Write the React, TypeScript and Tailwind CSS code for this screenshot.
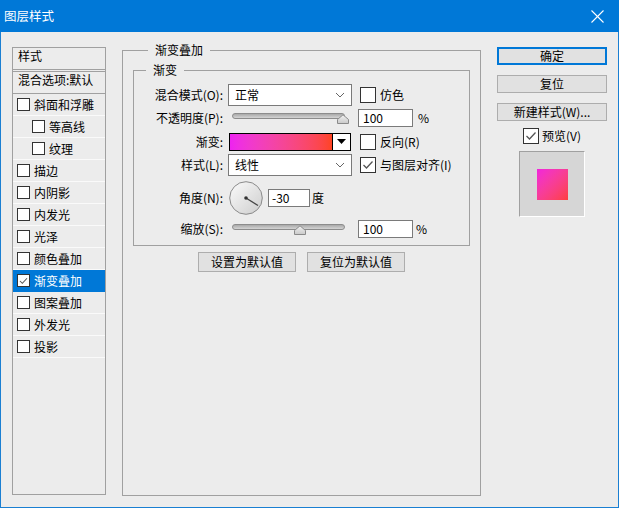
import React from "react";

function Check({ size, checked }: { size: "sm" | "md"; checked?: boolean }) {
  const cls =
    size === "sm"
      ? "w-[13px] h-[13px] border border-[#333333] bg-white flex items-center justify-center shrink-0"
      : "w-[16px] h-[16px] border border-[#333333] bg-white flex items-center justify-center shrink-0";
  return (
    <span className={cls}>
      {checked && (
        <svg width="14" height="14" viewBox="0 0 14 14">
          <polyline points="2.5,7 5.5,10 11.5,3.5" fill="none" stroke="#555" strokeWidth="1.3" />
        </svg>
      )}
    </span>
  );
}

function Chevron() {
  return (
    <svg width="10" height="6" viewBox="0 0 10 6" className="shrink-0">
      <polyline points="1,1 5,5 9,1" fill="none" stroke="#666" strokeWidth="1" />
    </svg>
  );
}

function Select({ text }: { text: string }) {
  return (
    <div className="w-[124px] h-[22px] bg-white border border-[#7a7a7a] flex items-center justify-between pl-[6px] pr-[6px]">
      <span>{text}</span>
      <Chevron />
    </div>
  );
}

function Thumb() {
  return (
    <svg width="12" height="10" viewBox="0 0 12 10">
      <defs>
        <linearGradient id="tg" x1="0" y1="0" x2="0" y2="1">
          <stop offset="0" stopColor="#f2f2f2" />
          <stop offset="1" stopColor="#c9c9c9" />
        </linearGradient>
      </defs>
      <path d="M0.5 9.5 L0.5 5.5 L6 0.8 L11.5 5.5 L11.5 9.5 Z" fill="url(#tg)" stroke="#8a8a8a" strokeWidth="1" />
    </svg>
  );
}

function Slider({ thumbClass }: { thumbClass: string }) {
  return (
    <div className="relative w-[124px] h-[20px] shrink-0">
      <div className="absolute left-[4px] top-[5px] w-[113px] h-[6px] rounded-full border border-[#8c8c8c] bg-linear-to-b from-[#a9a9a9] to-[#d4d4d4]" />
      <div className={thumbClass}>
        <Thumb />
      </div>
    </div>
  );
}

function Input({ value, w }: { value: string; w: "lg" | "sm" }) {
  const cls =
    w === "lg"
      ? "w-[55px] h-[18px] bg-white border border-[#7a7a7a] pl-[4px] flex items-center leading-[16px]"
      : "w-[42px] h-[18px] bg-white border border-[#7a7a7a] pl-[3px] flex items-center leading-[16px]";
  return <div className={cls}>{value}</div>;
}

function Label({ children }: { children: React.ReactNode }) {
  return <div className="w-[90px] text-right pr-[1px] shrink-0">{children}</div>;
}

const items: { name: string; indent?: boolean; selected?: boolean; checked?: boolean }[] = [
  { name: "斜面和浮雕" },
  { name: "等高线", indent: true },
  { name: "纹理", indent: true },
  { name: "描边" },
  { name: "内阴影" },
  { name: "内发光" },
  { name: "光泽" },
  { name: "颜色叠加" },
  { name: "渐变叠加", selected: true, checked: true },
  { name: "图案叠加" },
  { name: "外发光" },
  { name: "投影" },
];

function Button({ children, primary, cls }: { children: React.ReactNode; primary?: boolean; cls: string }) {
  return (
    <div
      className={
        (primary
          ? "border-2 border-[#0078d7] "
          : "border border-[#adadad] ") +
        "bg-[#e1e1e1] flex items-center justify-center leading-[14px] " +
        cls
      }
    >
      {children}
    </div>
  );
}

export default function App() {
  return (
    <div className="w-[619px] h-[508px] bg-[#1a7fd2] flex flex-col font-['Noto_Sans_CJK_SC','Noto_Sans',sans-serif] text-[12px] text-black leading-[16px] select-none">
      {/* Title bar */}
      <div className="h-[32px] shrink-0 bg-[#0078d7] flex items-center justify-between pl-[4px] pr-[15px] text-white">
        <span className="text-[12.5px]">图层样式</span>
        <svg width="13" height="13" viewBox="0 0 13 13">
          <line x1="0.5" y1="0.5" x2="12.5" y2="12.5" stroke="white" strokeWidth="1.1" />
          <line x1="12.5" y1="0.5" x2="0.5" y2="12.5" stroke="white" strokeWidth="1.1" />
        </svg>
      </div>

      {/* Body */}
      <div className="flex-1 mx-[1px] mb-[1px] bg-[#ececec] flex items-start">
        {/* Left list */}
        <div className="ml-[11px] mt-[15px] w-[94px] h-[448px] border border-[#a0a0a0] flex flex-col shrink-0">
          <div className="h-[22px] border-b border-[#a0a0a0] pl-[5px]">样式</div>
          <div className="mt-[1px] h-[23px] border-t border-b border-[#a0a0a0] pl-[5px] whitespace-nowrap overflow-hidden">
            混合选项:默认
          </div>
          {items.map((it) => (
            <div
              key={it.name}
              className={
                "h-[22px] border-b flex items-center gap-[4px] " +
                (it.selected ? "bg-[#0078d7] border-[#0078d7] text-white " : "border-[#fafafa] ") +
                (it.indent ? "pl-[19px]" : "pl-[4px]")
              }
            >
              <Check size="sm" checked={it.checked} />
              <span>{it.name}</span>
            </div>
          ))}
        </div>

        {/* Middle */}
        <div className="ml-[16px] mt-[10px] w-[359px] flex flex-col shrink-0">
          <fieldset className="h-[454px] border border-[#a0a0a0] px-[10px]">
            <legend className="ml-[15px] px-[7px] leading-[16px]">渐变叠加</legend>
            <fieldset className="mt-[3px] border border-[#a0a0a0] pt-[5px] pb-[7px]">
              <legend className="ml-[12px] px-[7px] leading-[18px]">渐变</legend>
              {/* row 1 */}
              <div className="h-[22px] flex items-center">
                <Label>混合模式(O):</Label>
                <div className="ml-[4px]">
                  <Select text="正常" />
                </div>
                <div className="ml-[8px] flex items-center gap-[4px]">
                  <Check size="md" />
                  <span>仿色</span>
                </div>
              </div>
              {/* row 2 */}
              <div className="mt-[2px] h-[20px] flex items-center">
                <Label>不透明度(P):</Label>
                <div className="ml-[4px]">
                  <Slider thumbClass="absolute left-[109px] top-[6px] w-[12px] h-[10px]" />
                </div>
                <div className="ml-[6px]">
                  <Input value="100" w="lg" />
                </div>
                <span className="ml-[5px]">%</span>
              </div>
              {/* row 3 */}
              <div className="mt-[4px] h-[19px] flex items-center">
                <Label>渐变:</Label>
                <div className="ml-[5px] w-[122px] h-[18px] border border-black flex">
                  <div className="flex-1 bg-linear-to-r from-[#ee22f0] to-[#ff4420]" />
                  <div className="w-[18px] border-l border-black bg-white flex items-center justify-center">
                    <svg width="9" height="5" viewBox="0 0 9 5">
                      <polygon points="0,0 9,0 4.5,5" fill="black" />
                    </svg>
                  </div>
                </div>
                <div className="ml-[9px] flex items-center gap-[4px]">
                  <Check size="md" />
                  <span>反向(R)</span>
                </div>
              </div>
              {/* row 4 */}
              <div className="mt-[3px] h-[22px] flex items-center">
                <Label>样式(L):</Label>
                <div className="ml-[4px]">
                  <Select text="线性" />
                </div>
                <div className="ml-[8px] flex items-center gap-[4px]">
                  <Check size="md" checked />
                  <span>与图层对齐(I)</span>
                </div>
              </div>
              {/* row 5 */}
              <div className="mt-[5px] h-[34px] flex items-center">
                <Label>角度(N):</Label>
                <div className="ml-[5px]">
                  <svg width="34" height="34" viewBox="0 0 34 34">
                    <defs>
                      <linearGradient id="dg" x1="0" y1="0" x2="1" y2="1">
                        <stop offset="0" stopColor="#fbfbfb" />
                        <stop offset="1" stopColor="#cdcdcd" />
                      </linearGradient>
                    </defs>
                    <circle cx="17" cy="17" r="16.3" fill="url(#dg)" stroke="#8a8a8a" strokeWidth="1" />
                    <line x1="17" y1="17" x2="29" y2="24.5" stroke="#444" strokeWidth="1.4" />
                    <circle cx="17" cy="17" r="1.8" fill="#333" />
                  </svg>
                </div>
                <div className="ml-[5px]">
                  <Input value="-30" w="sm" />
                </div>
                <span className="ml-[2px]">度</span>
              </div>
              {/* row 6 */}
              <div className="mt-[4px] h-[19px] flex items-center">
                <Label>缩放(S):</Label>
                <div className="ml-[4px]">
                  <Slider thumbClass="absolute left-[66px] top-[6px] w-[12px] h-[10px]" />
                </div>
                <div className="ml-[6px]">
                  <Input value="100" w="lg" />
                </div>
                <span className="ml-[3px]">%</span>
              </div>
            </fieldset>
            <div className="mt-[6px] flex justify-center gap-[11px]">
              <Button cls="w-[98px] h-[20px]">设置为默认值</Button>
              <Button cls="w-[98px] h-[20px]">复位为默认值</Button>
            </div>
          </fieldset>
        </div>

        {/* Right */}
        <div className="ml-[16px] mt-[15px] w-[110px] flex flex-col items-center shrink-0">
          <Button primary cls="w-[110px] h-[18px]">确定</Button>
          <Button cls="mt-[10px] w-[110px] h-[18px]">复位</Button>
          <Button cls="mt-[10px] w-[110px] h-[18px]">新建样式(W)...</Button>
          <div className="mt-[7px] h-[16px] flex items-center gap-[3px]">
            <Check size="md" checked />
            <span>预览(V)</span>
          </div>
          <div className="mt-[7px] w-[66px] h-[66px] border-t border-l border-b border-r border-t-[#a0a0a0] border-l-[#a0a0a0] border-b-white border-r-white bg-[#d6d6d6] flex items-center justify-center">
            <div className="w-[31px] h-[31px] bg-linear-to-br from-[#f222dc] to-[#ff3d3a]" />
          </div>
        </div>
      </div>
    </div>
  );
}
